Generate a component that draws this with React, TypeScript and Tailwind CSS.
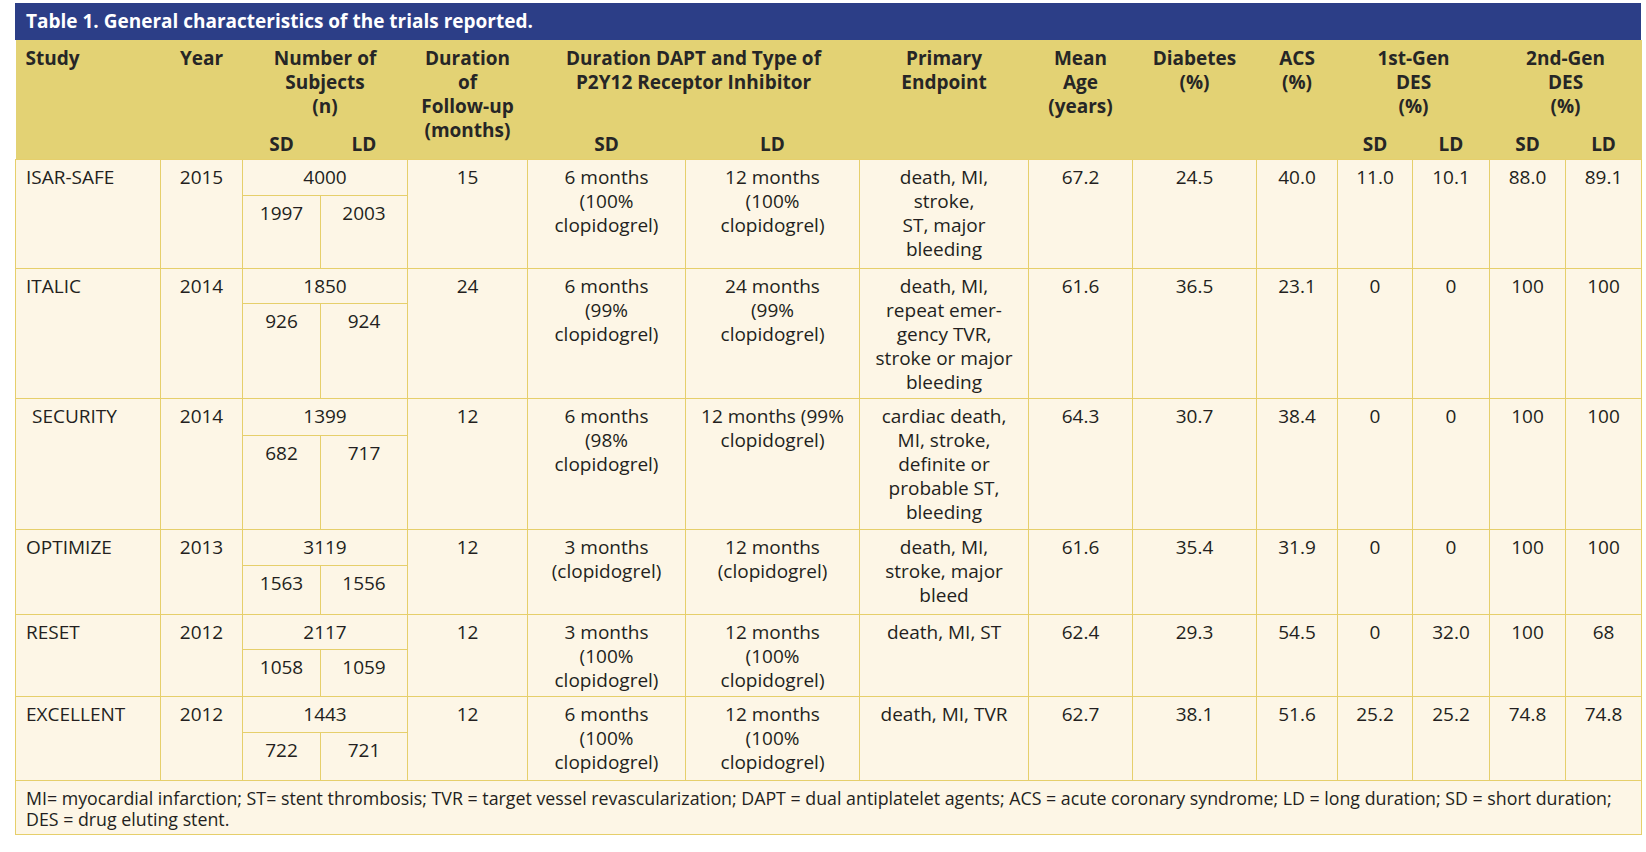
import React from "react";

type Row = {
  study: string;
  year: string;
  total: string;
  nsd: string;
  nld: string;
  fu: string;
  dsd: string[];
  dld: string[];
  ep: string[];
  age: string;
  diab: string;
  acs: string;
  g1sd: string;
  g1ld: string;
  g2sd: string;
  g2ld: string;
  top: string;
  bottom: string;
  indent?: boolean;
};

const rows: Row[] = [
  {
    study: "ISAR-SAFE", year: "2015", total: "4000", nsd: "1997", nld: "2003", fu: "15",
    dsd: ["6 months", "(100%", "clopidogrel)"], dld: ["12 months", "(100%", "clopidogrel)"],
    ep: ["death, MI,", "stroke,", "ST, major", "bleeding"],
    age: "67.2", diab: "24.5", acs: "40.0", g1sd: "11.0", g1ld: "10.1", g2sd: "88.0", g2ld: "89.1",
    top: "h-[36px]", bottom: "h-[73px]",
  },
  {
    study: "ITALIC", year: "2014", total: "1850", nsd: "926", nld: "924", fu: "24",
    dsd: ["6 months", "(99%", "clopidogrel)"], dld: ["24 months", "(99%", "clopidogrel)"],
    ep: ["death, MI,", "repeat emer-", "gency TVR,", "stroke or major", "bleeding"],
    age: "61.6", diab: "36.5", acs: "23.1", g1sd: "0", g1ld: "0", g2sd: "100", g2ld: "100",
    top: "h-[35px]", bottom: "h-[95px]",
  },
  {
    study: "SECURITY", year: "2014", total: "1399", nsd: "682", nld: "717", fu: "12",
    dsd: ["6 months", "(98%", "clopidogrel)"], dld: ["12 months (99%", "clopidogrel)"],
    ep: ["cardiac death,", "MI, stroke,", "definite or", "probable ST,", "bleeding"],
    age: "64.3", diab: "30.7", acs: "38.4", g1sd: "0", g1ld: "0", g2sd: "100", g2ld: "100",
    top: "h-[37px]", bottom: "h-[94px]", indent: true,
  },
  {
    study: "OPTIMIZE", year: "2013", total: "3119", nsd: "1563", nld: "1556", fu: "12",
    dsd: ["3 months", "(clopidogrel)"], dld: ["12 months", "(clopidogrel)"],
    ep: ["death, MI,", "stroke, major", "bleed"],
    age: "61.6", diab: "35.4", acs: "31.9", g1sd: "0", g1ld: "0", g2sd: "100", g2ld: "100",
    top: "h-[36px]", bottom: "h-[49px]",
  },
  {
    study: "RESET", year: "2012", total: "2117", nsd: "1058", nld: "1059", fu: "12",
    dsd: ["3 months", "(100%", "clopidogrel)"], dld: ["12 months", "(100%", "clopidogrel)"],
    ep: ["death, MI, ST"],
    age: "62.4", diab: "29.3", acs: "54.5", g1sd: "0", g1ld: "32.0", g2sd: "100", g2ld: "68",
    top: "h-[35px]", bottom: "h-[47px]",
  },
  {
    study: "EXCELLENT", year: "2012", total: "1443", nsd: "722", nld: "721", fu: "12",
    dsd: ["6 months", "(100%", "clopidogrel)"], dld: ["12 months", "(100%", "clopidogrel)"],
    ep: ["death, MI, TVR"],
    age: "62.7", diab: "38.1", acs: "51.6", g1sd: "25.2", g1ld: "25.2", g2sd: "74.8", g2ld: "74.8",
    top: "h-[36px]", bottom: "h-[48px]",
  },
];

const Lines = ({ lines }: { lines: string[] }) => (
  <>
    {lines.map((l, i) => (
      <div key={i} className="whitespace-nowrap">{l}</div>
    ))}
  </>
);

const td = "border border-[#e6cf6b] align-top text-center pt-[5px] px-0";
const th = "align-top text-center font-bold pt-[6px] px-0";
const sub = "align-middle text-center font-bold pt-[2px] px-0";

export default function App() {
  return (
    <div className="min-h-screen bg-white pt-[3px] pl-[15px]" style={{ fontFamily: "'Open Sans', Lato, sans-serif" }}>
      <div className="w-[1626px]">
        <div className="h-[37px] bg-[#2c3e87] text-white font-bold text-[19px] leading-[37px] pl-[11px]">
          Table 1. General characteristics of the trials reported.
        </div>
        <table className="table-fixed border-collapse w-[1626px] text-[19px] leading-[24px] text-[#231f20]">
          <colgroup>
            <col className="w-[145px]" />
            <col className="w-[82px]" />
            <col className="w-[78px]" />
            <col className="w-[87px]" />
            <col className="w-[120px]" />
            <col className="w-[158px]" />
            <col className="w-[174px]" />
            <col className="w-[169px]" />
            <col className="w-[104px]" />
            <col className="w-[124px]" />
            <col className="w-[81px]" />
            <col className="w-[75px]" />
            <col className="w-[77px]" />
            <col className="w-[76px]" />
            <col className="w-[76px]" />
          </colgroup>
          <thead className="bg-[#e3d274] text-[#262626]">
            <tr className="h-[88px]">
              <th rowSpan={2} className={`${th} text-left pl-[10px]`}>Study</th>
              <th rowSpan={2} className={th}>Year</th>
              <th colSpan={2} className={th}>
                <Lines lines={["Number of", "Subjects", "(n)"]} />
              </th>
              <th rowSpan={2} className={th}>
                <Lines lines={["Duration", "of", "Follow-up", "(months)"]} />
              </th>
              <th colSpan={2} className={th}>
                <Lines lines={["Duration DAPT and Type of", "P2Y12 Receptor Inhibitor"]} />
              </th>
              <th rowSpan={2} className={th}>
                <Lines lines={["Primary", "Endpoint"]} />
              </th>
              <th rowSpan={2} className={th}>
                <Lines lines={["Mean", "Age", "(years)"]} />
              </th>
              <th rowSpan={2} className={th}>
                <Lines lines={["Diabetes", "(%)"]} />
              </th>
              <th rowSpan={2} className={th}>
                <Lines lines={["ACS", "(%)"]} />
              </th>
              <th colSpan={2} className={th}>
                <Lines lines={["1st-Gen", "DES", "(%)"]} />
              </th>
              <th colSpan={2} className={th}>
                <Lines lines={["2nd-Gen", "DES", "(%)"]} />
              </th>
            </tr>
            <tr className="h-[31px]">
              <th className={sub}>SD</th>
              <th className={sub}>LD</th>
              <th className={sub}>SD</th>
              <th className={sub}>LD</th>
              <th className={sub}>SD</th>
              <th className={sub}>LD</th>
              <th className={sub}>SD</th>
              <th className={sub}>LD</th>
            </tr>
          </thead>
          <tbody className="bg-[#fdf6e6]">
            {rows.map((r) => (
              <React.Fragment key={r.study}>
                <tr className={r.top}>
                  <td rowSpan={2} className={`${td} text-left ${r.indent ? "pl-[16px]" : "pl-[10px]"}`}>{r.study}</td>
                  <td rowSpan={2} className={td}>{r.year}</td>
                  <td colSpan={2} className={td}>{r.total}</td>
                  <td rowSpan={2} className={td}>{r.fu}</td>
                  <td rowSpan={2} className={td}><Lines lines={r.dsd} /></td>
                  <td rowSpan={2} className={td}><Lines lines={r.dld} /></td>
                  <td rowSpan={2} className={td}><Lines lines={r.ep} /></td>
                  <td rowSpan={2} className={td}>{r.age}</td>
                  <td rowSpan={2} className={td}>{r.diab}</td>
                  <td rowSpan={2} className={td}>{r.acs}</td>
                  <td rowSpan={2} className={td}>{r.g1sd}</td>
                  <td rowSpan={2} className={td}>{r.g1ld}</td>
                  <td rowSpan={2} className={td}>{r.g2sd}</td>
                  <td rowSpan={2} className={td}>{r.g2ld}</td>
                </tr>
                <tr className={r.bottom}>
                  <td className={td}>{r.nsd}</td>
                  <td className={td}>{r.nld}</td>
                </tr>
              </React.Fragment>
            ))}
            <tr className="h-[54px]">
              <td colSpan={15} className="border border-[#e6cf6b] align-top text-left pl-[10px] pt-[7px] text-[17.8px] leading-[21px]">
                MI= myocardial infarction; ST= stent thrombosis; TVR = target vessel revascularization; DAPT = dual antiplatelet agents; ACS = acute coronary syndrome; LD = long duration; SD = short duration;
                <br />
                DES = drug eluting stent.
              </td>
            </tr>
          </tbody>
        </table>
      </div>
    </div>
  );
}
